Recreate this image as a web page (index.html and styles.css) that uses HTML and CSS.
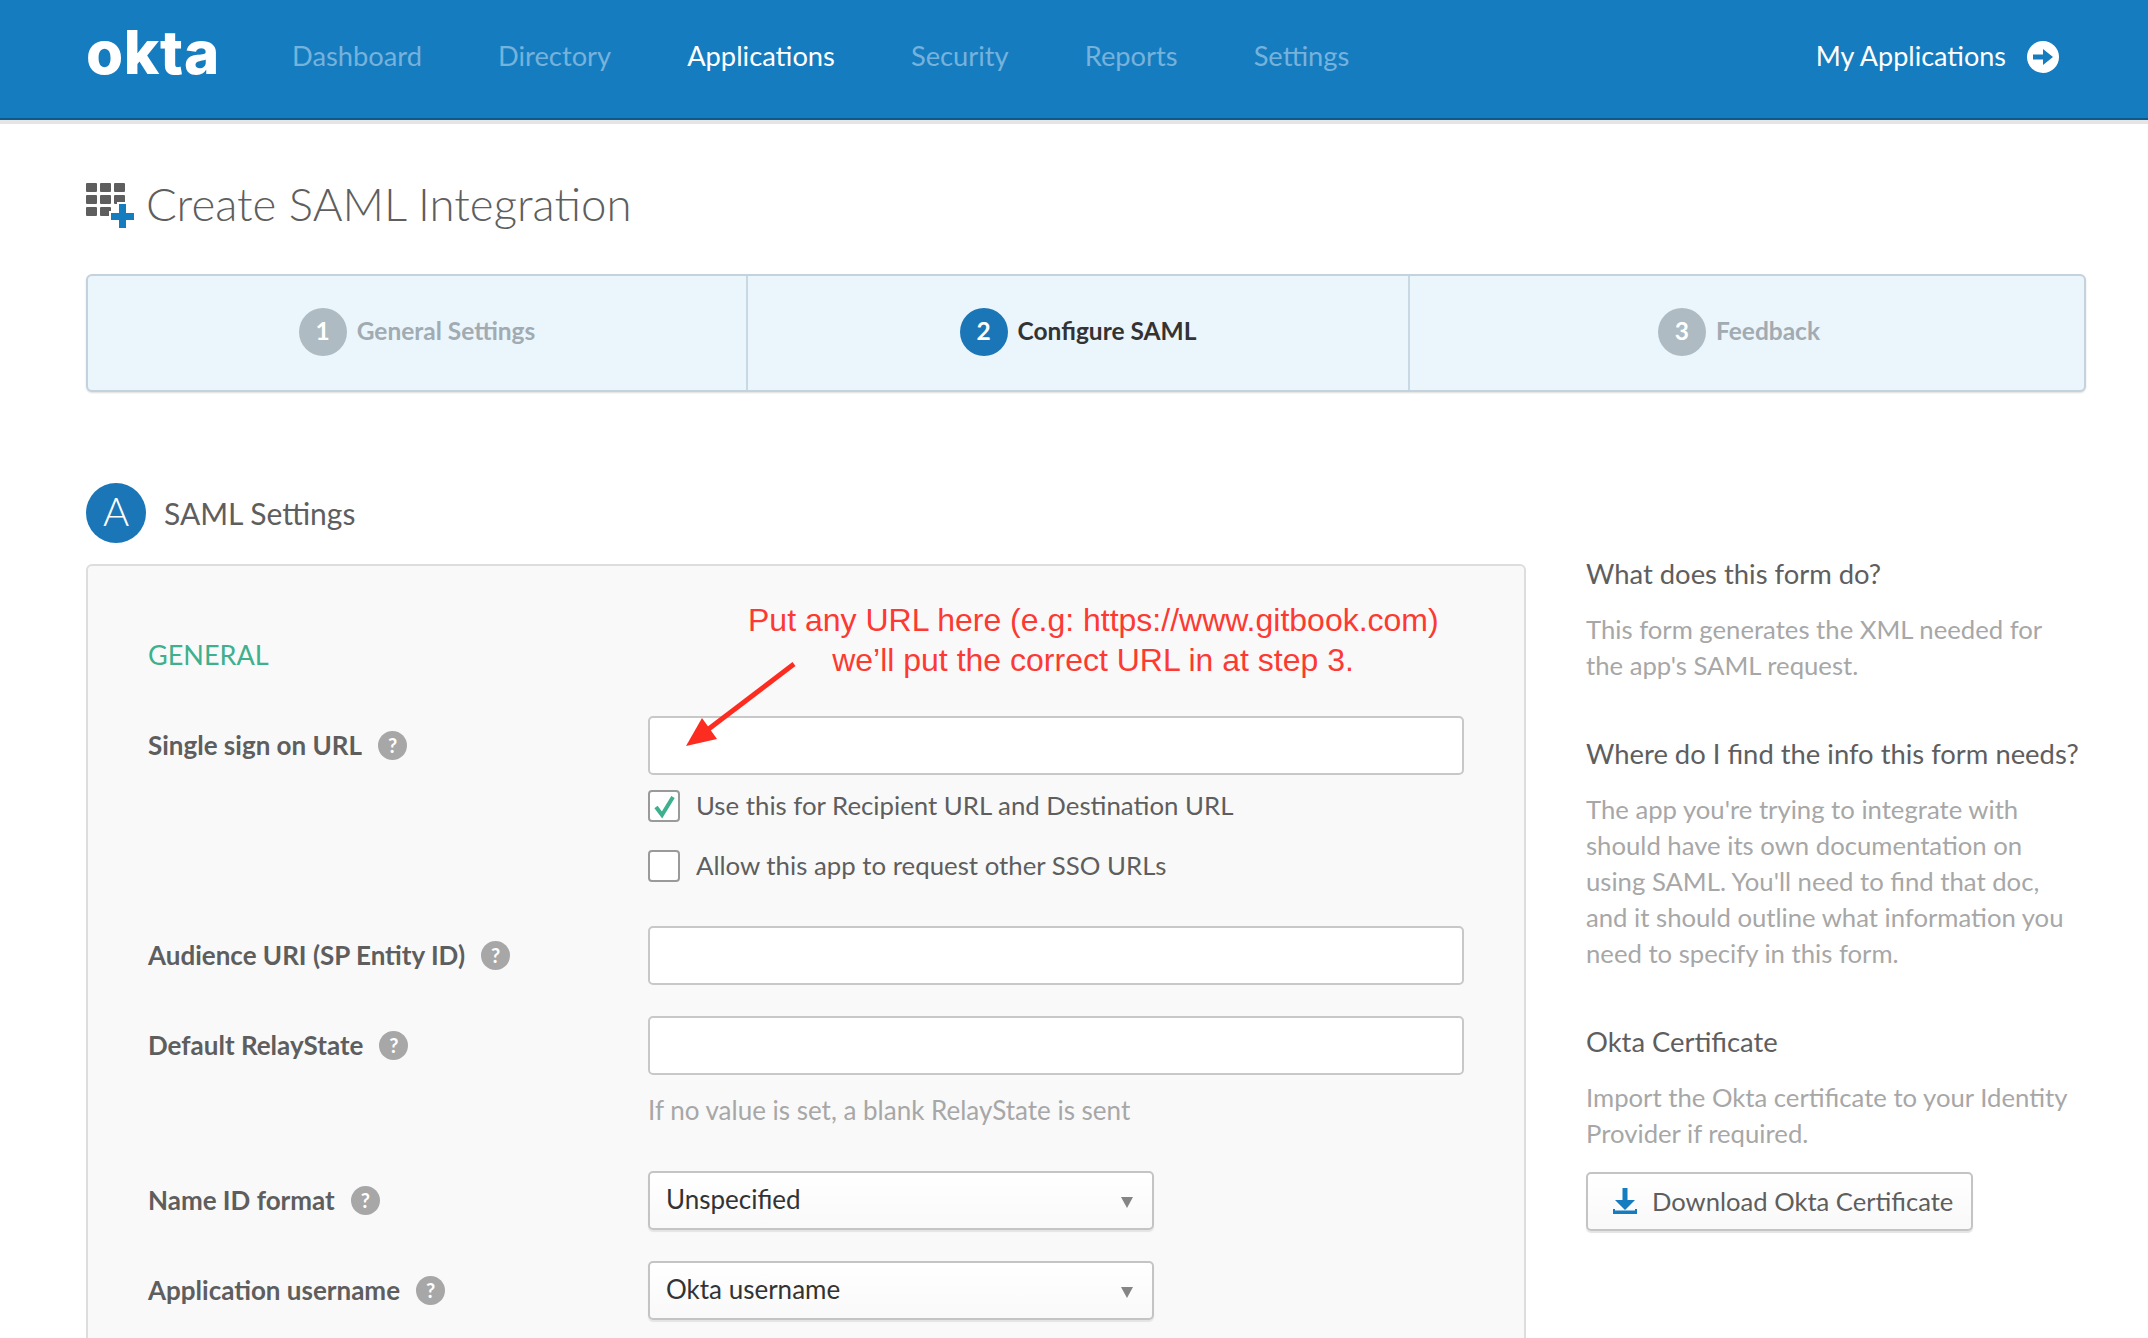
FILE: index.html
```html
<!DOCTYPE html>
<html lang="en">
<head>
  <meta charset="UTF-8">
  <meta name="viewport" content="width=device-width, initial-scale=1.0">
  <title>Create SAML Integration</title>
  <link rel="stylesheet" href="styles.css">
</head>
<body>

  <header class="topbar">
    <div class="logo">okta</div>
    <nav class="nav">
      <a>Dashboard</a>
      <a>Directory</a>
      <a class="active">Applications</a>
      <a>Security</a>
      <a>Reports</a>
      <a>Settings</a>
    </nav>
    <a class="my-apps">
      My Applications
      <svg width="32" height="32" viewBox="0 0 32 32">
        <circle cx="16" cy="16" r="16" fill="#fff"/>
        <path d="M6 13.500h10V8l10 8-10 8v-5.500H6z" fill="#157cc0"/>
      </svg>
    </a>
  </header>

  <main class="page">
    <div class="page-title">
      <svg width="48" height="46" viewBox="0 0 48 46">
        <g fill="#5e5e5e">
          <rect x="0" y="1" width="11" height="9" rx="1"/>
          <rect x="14" y="1" width="11" height="9" rx="1"/>
          <rect x="28" y="1" width="11" height="9" rx="1"/>
          <rect x="0" y="13" width="11" height="9" rx="1"/>
          <rect x="14" y="13" width="11" height="9" rx="1"/>
          <rect x="28" y="13" width="11" height="9" rx="1"/>
          <rect x="0" y="25" width="11" height="9" rx="1"/>
          <rect x="14" y="25" width="11" height="9" rx="1"/>
        </g>
        <path d="M33 22h7v9h8v7h-8v8h-7v-8h-8v-7h8z" fill="#157cc0" stroke="#fff" stroke-width="4" paint-order="stroke"/>
      </svg>
      <h1>Create SAML Integration</h1>
    </div>

    <div class="steps">
      <div class="step"><span class="step-num">1</span><span class="step-label">General Settings</span></div>
      <div class="step current"><span class="step-num">2</span><span class="step-label">Configure SAML</span></div>
      <div class="step"><span class="step-num">3</span><span class="step-label">Feedback</span></div>
    </div>

    <div class="section-head">
      <span class="section-badge">A</span>
      <h2>SAML Settings</h2>
    </div>

    <div class="section-body">
      <form class="form-panel">
        <div class="annotation">Put any URL here (e.g: https://www.gitbook.com)<br>we’ll put the correct URL in at step 3.</div>
        <svg class="annotation-arrow" width="120" height="92" viewBox="0 0 120 92">
          <path d="M114 2L26 69" stroke="#fc2c21" stroke-width="5" fill="none"/>
          <path d="M6 84L22 56l15 21z" fill="#fc2c21"/>
        </svg>

        <div class="group-label">GENERAL</div>

        <div class="form-row first">
          <label class="field-label">Single sign on URL <span class="help">?</span></label>
          <div class="field">
            <input type="text" class="text-input">
            <label class="check first-check">
              <span class="box">
                <svg width="25" height="25" viewBox="0 0 25 25"><path d="M4 13l6 8L21 3" stroke="#3fb08e" stroke-width="4" fill="none"/></svg>
              </span>
              <span class="check-text">Use this for Recipient URL and Destination URL</span>
            </label>
            <label class="check">
              <span class="box"></span>
              <span class="check-text">Allow this app to request other SSO URLs</span>
            </label>
          </div>
        </div>

        <div class="form-row">
          <label class="field-label">Audience URI (SP Entity ID) <span class="help">?</span></label>
          <div class="field"><input type="text" class="text-input"></div>
        </div>

        <div class="form-row">
          <label class="field-label">Default RelayState <span class="help">?</span></label>
          <div class="field">
            <input type="text" class="text-input">
            <p class="hint">If no value is set, a blank RelayState is sent</p>
          </div>
        </div>

        <div class="form-row">
          <label class="field-label">Name ID format <span class="help">?</span></label>
          <div class="field"><div class="select"><select><option>Unspecified</option></select></div></div>
        </div>

        <div class="form-row">
          <label class="field-label">Application username <span class="help">?</span></label>
          <div class="field"><div class="select"><select><option>Okta username</option></select></div></div>
        </div>
      </form>

      <aside class="side">
        <h3>What does this form do?</h3>
        <p>This form generates the XML needed for the app's SAML request.</p>

        <h3>Where do I find the info this form needs?</h3>
        <p>The app you're trying to integrate with should have its own documentation on using SAML. You'll need to find that doc, and it should outline what information you need to specify in this form.</p>

        <h3>Okta Certificate</h3>
        <p>Import the Okta certificate to your Identity Provider if required.</p>

        <a class="download-btn">
          <svg width="26" height="28" viewBox="0 0 26 28">
            <path d="M10.500 1h5v12h7.500L13 23 3 13h7.500z" fill="#157cc0"/>
            <path d="M1 22v5h24v-5h-2v1.500H3V22z" fill="#157cc0"/>
          </svg>
          Download Okta Certificate
        </a>
      </aside>
    </div>
  </main>

</body>
</html>
```

FILE: styles.css
```css
html, body {
  height: 1338px;
  overflow: hidden;
}

body {
  margin: 0;
  font-family: Lato, "Open Sans", sans-serif;
  color: #5e5e5e;
  background-color: #fff;
}

h1, h2, h3, p {
  margin: 0;
  font-weight: normal;
}

/* top bar */
.topbar {
  display: flex;
  align-items: center;
  height: 115px;
  padding: 0 89px 3px 86px;
  background-color: #157cc0;
  border-bottom: 2px solid #0e5a8a;
  box-shadow: 0 4px 0 #e5e5e5;
  color: #fff;
}

.logo {
  width: 206px;
  margin-bottom: 11px;
  font-family: Inter, Lato, sans-serif;
  font-size: 60px;
  font-weight: 800;
  line-height: 1;
  letter-spacing: 0.700px;
}

.nav {
  display: flex;
  gap: 76px;
  flex: 1;
  margin-bottom: 4px;
  font-size: 27.300px;
}

.nav a {
  color: #75b2dc;
}

.nav a.active {
  color: #fff;
}

.my-apps {
  display: flex;
  align-items: center;
  gap: 21px;
  margin-bottom: 4px;
  font-size: 27px;
}

.my-apps svg {
  margin-top: 3px;
}

/* page */
.page {
  padding: 0 62px 0 86px;
}

.page-title {
  display: flex;
  align-items: center;
  gap: 12px;
  height: 46px;
  margin-top: 62px;
}

.page-title h1 {
  margin-bottom: 3px;
  font-size: 45.600px;
  font-weight: 300;
}

.steps {
  display: flex;
  height: 118px;
  margin-top: 46px;
  background-color: #ebf5fc;
  border: 2px solid #c3d2dd;
  border-radius: 6px;
  box-sizing: border-box;
  box-shadow: 0 1px 2px #ddd;
}

.step {
  flex: none;
  display: flex;
  align-items: center;
  justify-content: center;
  gap: 10px;
  width: 662px;
  padding-bottom: 2px;
  box-sizing: border-box;
  font-size: 24.500px;
  font-weight: 700;
  color: #a1abb1;
  border-left: 2px solid #c9d9e4;
}

.step:first-child {
  width: 658px;
  border-left: none;
}

.step:last-child {
  width: 660px;
}

.step-label {
  padding-bottom: 4px;
}

.step-num {
  display: flex;
  align-items: center;
  justify-content: center;
  width: 48px;
  height: 48px;
  padding-bottom: 4px;
  box-sizing: border-box;
  border-radius: 50%;
  background-color: #aebbc3;
  color: #fff;
}

.step.current {
  color: #333;
}

.step.current .step-num {
  background-color: #1a76b7;
}

.section-head {
  display: flex;
  align-items: center;
  gap: 18px;
  margin-top: 91px;
  height: 60px;
}

.section-badge {
  display: flex;
  align-items: center;
  justify-content: center;
  width: 60px;
  height: 60px;
  padding-bottom: 4px;
  box-sizing: border-box;
  border-radius: 50%;
  background-color: #1a76b7;
  color: #fff;
  font-size: 40px;
  font-weight: 300;
}

.section-head h2 {
  font-size: 30px;
}

.section-body {
  display: flex;
  gap: 60px;
  margin-top: 13px;
}

/* form */
.form-panel {
  position: relative;
  flex: none;
  width: 1440px;
  margin-top: 8px;
  padding: 65px 60px 40px;
  box-sizing: border-box;
  background-color: #f9f9f9;
  border: 2px solid #ddd;
  border-radius: 6px;
}

.annotation {
  position: absolute;
  left: 660px;
  top: 34px;
  width: 690px;
  font-family: "Liberation Sans", Arial, sans-serif;
  font-size: 32px;
  line-height: 40px;
  color: #fc3a33;
  text-align: center;
  white-space: nowrap;
}

.annotation-arrow {
  position: absolute;
  left: 592px;
  top: 96px;
}

.group-label {
  height: 48px;
  margin-bottom: 37px;
  font-size: 27px;
  line-height: 48px;
  color: #3fb08e;
}

.form-row {
  display: flex;
  margin-bottom: 31px;
}

.form-row.first {
  margin-bottom: 44px;
}

.field-label {
  display: flex;
  align-items: center;
  gap: 16px;
  flex: none;
  width: 500px;
  height: 58px;
  font-size: 26px;
  font-weight: 700;
}

.help {
  display: flex;
  align-items: center;
  justify-content: center;
  width: 29px;
  height: 29px;
  border-radius: 50%;
  background-color: #a7a7a7;
  color: #fff;
  font-size: 20px;
}

.field {
  flex: 1;
}

.text-input {
  display: block;
  width: 816px;
  height: 59px;
  box-sizing: border-box;
  background-color: #fff;
  border: 2px solid #c8c8c8;
  border-radius: 5px;
}

.check {
  display: flex;
  align-items: center;
  gap: 16px;
  height: 32px;
  margin-top: 28px;
  font-size: 25.800px;
}

.check.first-check {
  margin-top: 15px;
}

.check-text {
  padding-bottom: 2px;
}

.box {
  display: flex;
  align-items: center;
  justify-content: center;
  width: 32px;
  height: 32px;
  box-sizing: border-box;
  background-color: #fff;
  border: 2px solid #9a9a9a;
  border-radius: 4px;
}

.hint {
  margin-top: 17px;
  margin-bottom: 12px;
  font-size: 26px;
  line-height: 36px;
  color: #a7a7a7;
}

.select {
  position: relative;
  width: 506px;
}

.select select {
  display: block;
  width: 100%;
  height: 59px;
  padding: 0 16px 3px;
  box-sizing: border-box;
  appearance: none;
  background: linear-gradient(#fff, #f9f9f9);
  border: 2px solid #c4c4c4;
  border-radius: 5px;
  box-shadow: 0 2px 1px #e4e4e4;
  font-family: inherit;
  font-size: 26px;
  color: #333;
}

.select::after {
  content: "";
  position: absolute;
  right: 21px;
  top: 26px;
  border-top: 11px solid #858585;
  border-left: 6px solid transparent;
  border-right: 6px solid transparent;
}

/* side column */
.side {
  flex: none;
  width: 500px;
}

.side h3 {
  font-size: 27.400px;
  line-height: 36px;
}

.side p {
  max-width: 490px;
  margin: 19px 0 53px;
  font-size: 25.700px;
  line-height: 36px;
  color: #a7a7a7;
}

.side p:last-of-type {
  margin-bottom: 21px;
}

.download-btn {
  display: inline-flex;
  align-items: center;
  gap: 14px;
  height: 59px;
  width: 387px;
  padding-left: 24px;
  padding-bottom: 2px;
  box-sizing: border-box;
  background: linear-gradient(#fff, #f9f9f9);
  border: 2px solid #c4c4c4;
  border-radius: 5px;
  box-shadow: 0 2px 1px #e4e4e4;
  font-size: 25.600px;
}
```
